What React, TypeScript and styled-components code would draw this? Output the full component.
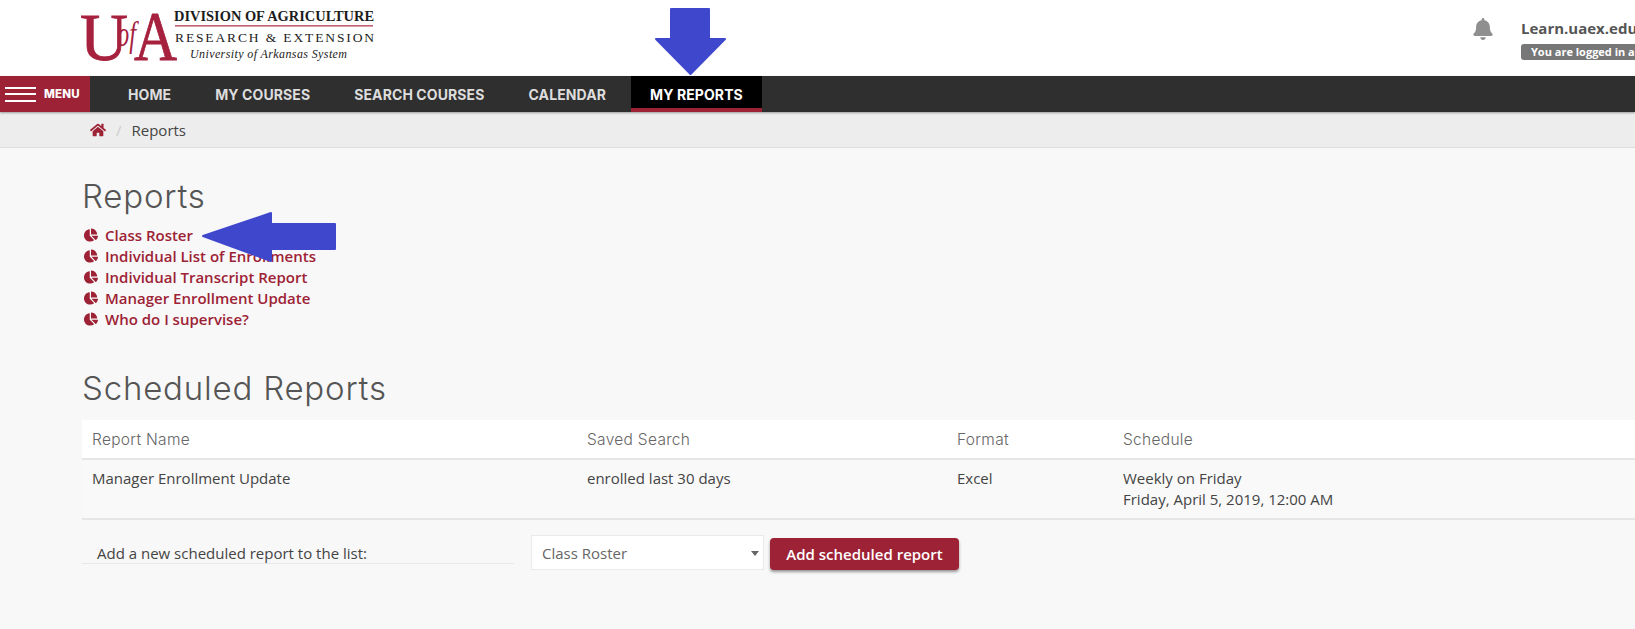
import React, { FC } from 'react'
import styled, { createGlobalStyle } from 'styled-components'
import { FaBell, FaChartPie, FaHome } from 'react-icons/fa'

const maroon = '#9d2235'
const annotation = '#3f48cc'

const GlobalStyle = createGlobalStyle`
	html, body {
		margin: 0;
		padding: 0;
		height: 100%;
		overflow: hidden;
		background: #f8f8f8;
		font-family: 'Open Sans', 'Liberation Sans', sans-serif;
		font-size: 15px;
		color: #444;
	}
	* {
		box-sizing: border-box;
	}
`

const Page = styled.div`
	position: relative;
	width: 1635px;
	height: 629px;
	overflow: hidden;
`

const Header = styled.header`
	height: 76px;
	background: #fff;
	display: flex;
	justify-content: space-between;
`

const LogoSvg = styled.svg`
	width: 310px;
	height: 76px;
	margin-left: 70px;
	display: block;
`

const Account = styled.div`
	width: 163px;
	display: flex;
	overflow: hidden;
	white-space: nowrap;
`

const BellSlot = styled.div`
	width: 49px;
	flex: none;
	padding: 18px 0 0 0;
	color: #8f8f8f;
	font-size: 22px;
	line-height: 1;
	svg {
		display: block;
	}
`

const AccountText = styled.div`
	padding-top: 18px;
`

const SiteName = styled.div`
	font-size: 15px;
	font-weight: 700;
	line-height: 20px;
	color: #555;
`

const LoginBadge = styled.div`
	margin-top: 6px;
	height: 16px;
	width: 200px;
	padding-left: 10px;
	border-radius: 3px;
	background: #777;
	color: #fff;
	font-size: 11px;
	font-weight: 700;
	line-height: 16px;
`

const NavBar = styled.nav`
	height: 36px;
	background: #2f2f2f;
	display: flex;
	box-shadow: 0 1px 2px rgba(0, 0, 0, 0.35);
	position: relative;
`

const MenuButton = styled.div`
	width: 90px;
	background: ${maroon};
	display: flex;
	align-items: center;
	padding-left: 5px;
	gap: 8px;
	color: #fff;
	font-family: Inter, 'Liberation Sans', sans-serif;
	font-size: 11.5px;
	font-weight: 800;
	letter-spacing: 0.2px;
`

const MenuBars = styled.div`
	width: 31px;
	height: 15px;
	border-top: 2px solid #fff;
	border-bottom: 2px solid #fff;
	position: relative;
	&::after {
		content: '';
		position: absolute;
		left: 0;
		right: 0;
		top: 4.5px;
		height: 2px;
		background: #fff;
	}
`

const NavList = styled.div`
	display: flex;
	gap: 6px;
	margin-left: 19px;
`

const NavItem = styled.div<{ $active?: boolean }>`
	position: relative;
	padding: 0 19px;
	display: flex;
	align-items: center;
	font-family: Inter, 'Liberation Sans', sans-serif;
	font-size: 14px;
	font-weight: 700;
	letter-spacing: 0.1px;
	color: ${(props) => (props.$active ? '#fff' : '#ddd')};
	background: ${(props) => (props.$active ? '#000' : 'transparent')};
	&::after {
		content: '';
		display: ${(props) => (props.$active ? 'block' : 'none')};
		position: absolute;
		left: 0;
		right: 0;
		bottom: 0;
		height: 4px;
		background: ${maroon};
	}
`

const Breadcrumb = styled.div`
	height: 36px;
	background: #ededed;
	border-bottom: 1px solid #ddd;
	display: flex;
	align-items: center;
	padding-left: 90px;
	color: #444;
	font-size: 15px;
	svg {
		color: ${maroon};
		font-size: 16px;
	}
`

const BreadcrumbSep = styled.span`
	color: #ccc;
	margin: 0 10px 0 10px;
`

const Main = styled.main`
	padding: 28px 0 0 82px;
`

const Heading = styled.h1`
	margin: 0;
	font-family: Inter, 'Liberation Sans', sans-serif;
	font-size: 33px;
	font-weight: 300;
	line-height: 40px;
	letter-spacing: 0.8px;
	color: #555;
`

const ReportList = styled.ul`
	list-style: none;
	margin: 8px 0 39px;
	padding: 0 0 0 2px;
`

const ReportItem = styled.li`
	height: 21px;
	display: flex;
	align-items: center;
	gap: 7px;
	color: ${maroon};
	font-size: 15px;
	font-weight: 600;
	svg {
		font-size: 14px;
	}
`

const Table = styled.div`
	margin-top: 12px;
`

const TableRow = styled.div<{ $head?: boolean }>`
	display: grid;
	grid-template-columns: 495px 370px 166px 1fr;
	padding: ${(props) => (props.$head ? '9px 0 0 10px' : '8px 0 0 10px')};
	height: ${(props) => (props.$head ? '40px' : '60px')};
	background: ${(props) => (props.$head ? '#fff' : '#f9f9f9')};
	border-bottom: 2px solid #e6e6e6;
	font-family: ${(props) =>
		props.$head ? "Inter, 'Liberation Sans', sans-serif" : "'Open Sans', sans-serif"};
	font-size: ${(props) => (props.$head ? '15.5px' : '15px')};
	letter-spacing: ${(props) => (props.$head ? '0.3px' : '0')};
	font-weight: ${(props) => (props.$head ? 300 : 400)};
	color: ${(props) => (props.$head ? '#666' : '#444')};
	line-height: 21px;
`

const AddRow = styled.div`
	display: flex;
	align-items: flex-start;
	margin-top: 15px;
`

const AddLabel = styled.div`
	width: 432px;
	height: 29px;
	padding: 9px 0 0 15px;
	border-bottom: 1px solid #e8e8e8;
	line-height: 19px;
`

const SelectWrap = styled.div`
	position: relative;
	width: 233px;
	height: 35px;
	margin-left: 17px;
	&::after {
		content: '';
		position: absolute;
		right: 5px;
		top: 16px;
		border: 4px solid transparent;
		border-top: 5px solid #666;
		border-bottom: 0;
	}
`

const ReportSelect = styled.select`
	width: 100%;
	height: 100%;
	appearance: none;
	background: #fff;
	border: 1px solid #eaeaea;
	border-radius: 0;
	padding: 0 10px;
	font-family: 'Open Sans', sans-serif;
	font-size: 15px;
	color: #666;
`

const AddButton = styled.button`
	width: 189px;
	height: 32px;
	margin: 3px 0 0 6px;
	background: ${maroon};
	border: 0;
	border-radius: 4px;
	box-shadow: 0 2px 3px rgba(0, 0, 0, 0.4);
	color: #fff;
	font-family: 'Open Sans', sans-serif;
	font-size: 15px;
	font-weight: 600;
`

const ArrowMark = styled.svg<{ $left: number; $top: number }>`
	position: absolute;
	left: ${(props) => props.$left}px;
	top: ${(props) => props.$top}px;
	fill: ${annotation};
	stroke: ${annotation};
	stroke-width: 2;
	stroke-linejoin: round;
`

const Logo: FC = () => (
	<LogoSvg viewBox="0 0 310 76">
		<g
			fill="#a6213e"
			stroke="#a6213e"
			strokeWidth="0.8"
			fontFamily="'Liberation Serif', serif"
		>
			<text x="10" y="60" fontSize="68" textLength="48" lengthAdjust="spacingAndGlyphs">
				U
			</text>
			<text
				x="47"
				y="46"
				fontSize="36"
				fontStyle="italic"
				strokeWidth="0"
				textLength="19"
				lengthAdjust="spacingAndGlyphs"
			>
				of
			</text>
			<text x="64" y="60" fontSize="70" textLength="43" lengthAdjust="spacingAndGlyphs">
				A
			</text>
		</g>
		<g fill="#1c1c1c" fontFamily="'Liberation Serif', serif">
			<text
				x="104"
				y="21"
				fontSize="15.5"
				fontWeight="700"
				textLength="200"
				lengthAdjust="spacingAndGlyphs"
			>
				DIVISION OF AGRICULTURE
			</text>
			<rect x="105" y="25" width="198" height="1.6" fill="#c4606f" />
			<text x="105" y="42" fontSize="13.5" textLength="199" lengthAdjust="spacing">
				RESEARCH &amp; EXTENSION
			</text>
			<text
				x="120"
				y="58"
				fontSize="12"
				fontStyle="italic"
				textLength="157"
				lengthAdjust="spacing"
			>
				University of Arkansas System
			</text>
		</g>
	</LogoSvg>
)

const reports = [
	'Class Roster',
	'Individual List of Enrollments',
	'Individual Transcript Report',
	'Manager Enrollment Update',
	'Who do I supervise?',
]

const navItems = ['HOME', 'MY COURSES', 'SEARCH COURSES', 'CALENDAR']

const App: FC = () => {
	return (
		<Page>
			<GlobalStyle />
			<Header>
				<Logo />
				<Account>
					<BellSlot>
						<FaBell />
					</BellSlot>
					<AccountText>
						<SiteName>Learn.uaex.edu</SiteName>
						<LoginBadge>You are logged in as</LoginBadge>
					</AccountText>
				</Account>
			</Header>
			<NavBar>
				<MenuButton>
					<MenuBars />
					MENU
				</MenuButton>
				<NavList>
					{navItems.map((item) => (
						<NavItem key={item}>{item}</NavItem>
					))}
					<NavItem $active>MY REPORTS</NavItem>
				</NavList>
			</NavBar>
			<Breadcrumb>
				<FaHome />
				<BreadcrumbSep>/</BreadcrumbSep>
				Reports
			</Breadcrumb>
			<Main>
				<Heading>Reports</Heading>
				<ReportList>
					{reports.map((report) => (
						<ReportItem key={report}>
							<FaChartPie />
							{report}
						</ReportItem>
					))}
				</ReportList>
				<Heading>Scheduled Reports</Heading>
				<Table>
					<TableRow $head>
						<div>Report Name</div>
						<div>Saved Search</div>
						<div>Format</div>
						<div>Schedule</div>
					</TableRow>
					<TableRow>
						<div>Manager Enrollment Update</div>
						<div>enrolled last 30 days</div>
						<div>Excel</div>
						<div>
							Weekly on Friday
							<br />
							Friday, April 5, 2019, 12:00 AM
						</div>
					</TableRow>
				</Table>
				<AddRow>
					<AddLabel>Add a new scheduled report to the list:</AddLabel>
					<SelectWrap>
						<ReportSelect defaultValue="Class Roster">
							{reports.map((report) => (
								<option key={report}>{report}</option>
							))}
						</ReportSelect>
					</SelectWrap>
					<AddButton>Add scheduled report</AddButton>
				</AddRow>
			</Main>
			<ArrowMark $left={654} $top={7} width="73" height="72" viewBox="0 0 73 72">
				<path d="M17 2 H55 V32 H71 L36.5 67 L2 32 H17 Z" />
			</ArrowMark>
			<ArrowMark $left={201} $top={211} width="136" height="52" viewBox="0 0 136 52">
				<path d="M2 25 L70 2 V13 H134 V38 H70 V50 Z" />
			</ArrowMark>
		</Page>
	)
}

export default App
